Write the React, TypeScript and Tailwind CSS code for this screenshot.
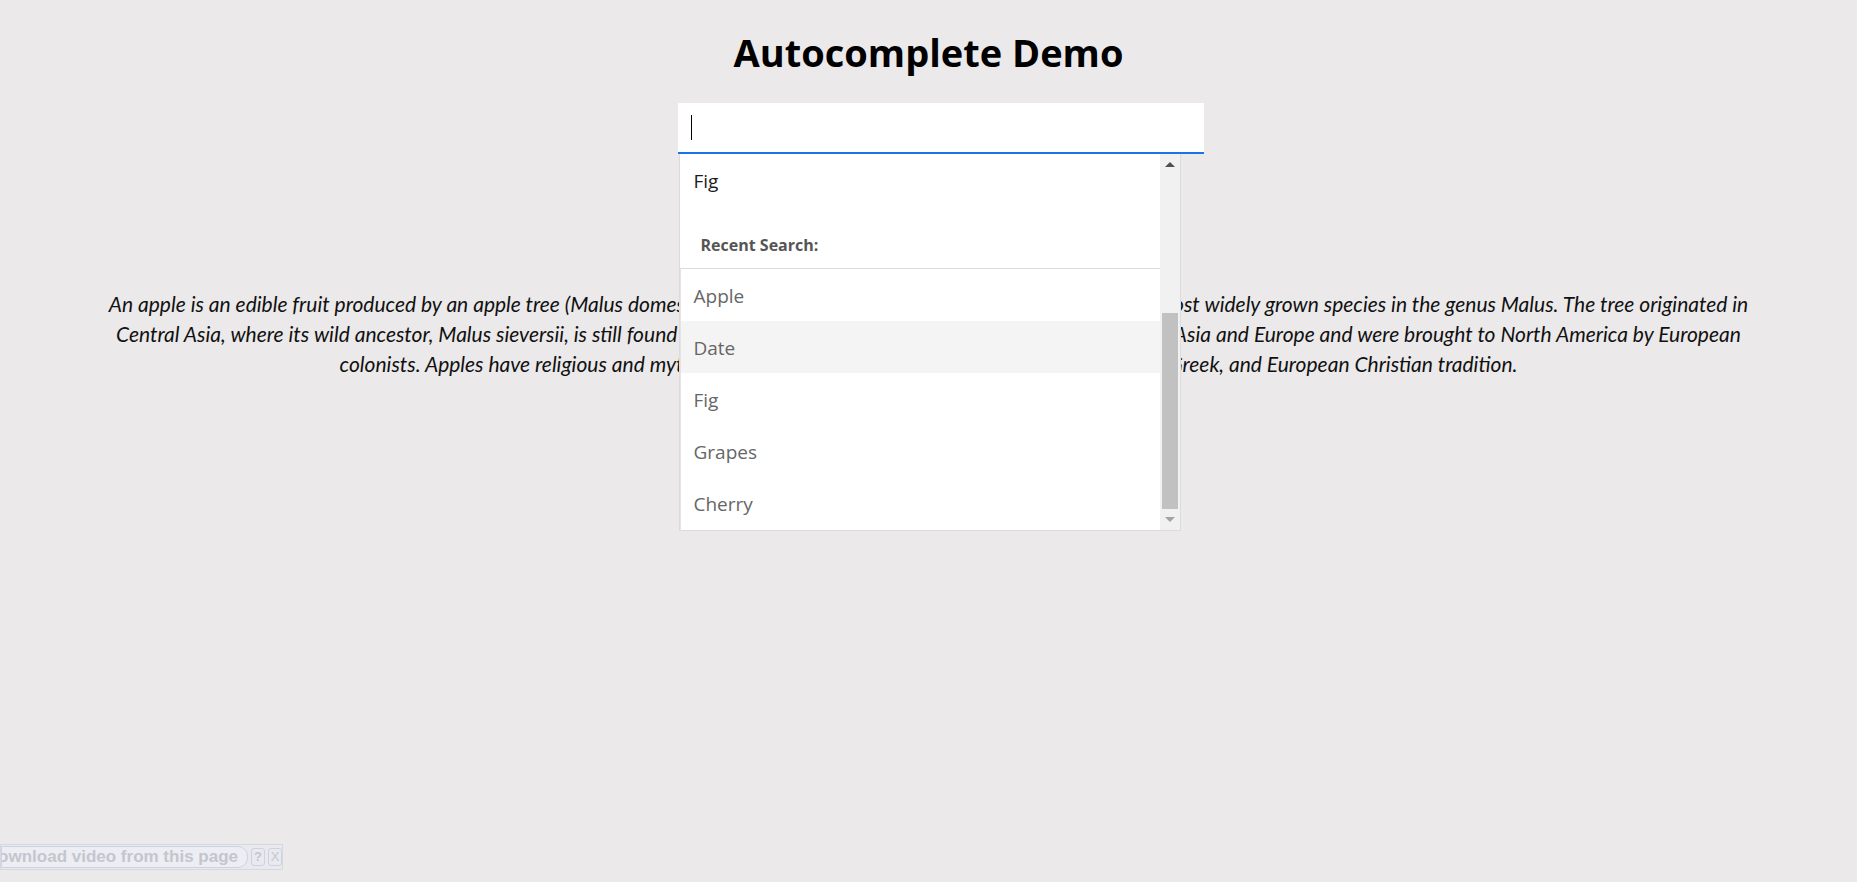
import { useEffect, useRef } from "react";

const RECENT = ["Apple", "Date", "Fig", "Grapes", "Cherry"];

/** Classic scrollbar drawn by hand so the picture does not depend on the browser's own. */
function FakeScrollbar() {
  return (
    <div aria-hidden className="flex w-[21px] shrink-0 flex-col border-r border-[#dcdcdc] bg-[#f1f1f1]">
      <div className="flex h-[21px] items-center justify-center">
        <span className="h-0 w-0 border-x-[5px] border-b-[5px] border-x-transparent border-b-[#505050]" />
      </div>
      <div className="flex-1 px-[2px]">
        <div className="mt-[138px] h-[196px] bg-[#c1c1c1]" />
      </div>
      <div className="flex h-[21px] items-center justify-center">
        <span className="h-0 w-0 border-x-[5px] border-t-[5px] border-x-transparent border-t-[#a3a3a3]" />
      </div>
    </div>
  );
}

function Dropdown() {
  return (
    <div className="absolute left-[1px] top-full z-10 flex h-[377px] w-[502px] border-b border-l border-[#dcdcdc] bg-white">
      <div className="flex min-w-0 flex-1 flex-col">
        <div className="flex h-[54px] shrink-0 items-center px-[14px] text-[19px] text-[#1b1b1b]">Fig</div>
        <div className="flex h-[61px] shrink-0 items-end border-b border-[#dcdcdc] pb-[11px] pl-[21px] text-[16px] font-bold text-[#555]">
          Recent Search:
        </div>
        <ul className="flex-1 border-l border-[#e4e4e4]">
          {RECENT.map((item) => (
            <li
              key={item}
              className={`flex h-[52px] items-center px-[13px] pt-[3px] text-[19px] text-[#666] ${
                item === "Date" ? "bg-[#f4f4f4]" : ""
              }`}
            >
              {item}
            </li>
          ))}
        </ul>
      </div>
      <FakeScrollbar />
    </div>
  );
}

export default function App() {
  const inputRef = useRef<HTMLInputElement>(null);

  useEffect(() => {
    inputRef.current?.focus();
  }, []);

  return (
    <div className="relative min-h-[882px] bg-[#ebe9ea] font-['Open_Sans',sans-serif]">
      <div className="flex flex-col items-center pt-[24px]">
        <h1 className="text-[38px] font-bold leading-[56px] text-black">Autocomplete Demo</h1>

        <div className="relative ml-[24px] mt-[23px] h-[51px] w-[526px]">
          <input
            ref={inputRef}
            type="text"
            className="h-full w-full border-b-2 border-[#1a73e8] bg-white px-[12px] text-[19px] text-black caret-black outline-none"
          />
          {/* caret as caught in the screenshot */}
          <span aria-hidden className="pointer-events-none absolute left-[13px] top-[12px] h-[25px] w-px bg-black" />
          <Dropdown />
        </div>

        <p className="mt-[135px] w-[1700px] text-center font-['Lato',sans-serif] text-[21px] italic leading-[30px] text-[#111]">
          An apple is an edible fruit produced by an apple tree (Malus domestica). Apple trees are cultivated
          worldwide and are the most widely grown species in the genus Malus. The tree originated in
          <br />
          Central Asia, where its wild ancestor, Malus sieversii, is still found today. Apples have been grown for
          thousands of years in Asia and Europe and were brought to North America by European
          <br />
          colonists. Apples have religious and mythological significance in many cultures, including Norse,
          Greek, and European Christian tradition.
        </p>
      </div>

      {/* browser extension overlay in the bottom-left corner */}
      <div className="absolute left-0 top-[844px] flex h-[26px] w-[283px] items-center overflow-hidden border border-[#d3d8e2] bg-[#e9eaf0] font-['Liberation_Sans',Arial,sans-serif]">
        <div className="flex h-[22px] w-[247px] shrink-0 items-center justify-end overflow-hidden whitespace-nowrap rounded-r-[10px] border border-[#cdd2dc] bg-[#eceef3] pr-[9px] text-[17px] font-bold text-[#c3c6cf]">
          Download video from this page
        </div>
        <span className="ml-[3px] flex h-[18px] w-[14px] items-center justify-center rounded-[3px] border border-[#cdd2dc] text-[13px] font-bold text-[#c3c6cf]">
          ?
        </span>
        <span className="ml-[3px] flex h-[18px] w-[14px] items-center justify-center rounded-[3px] border border-[#cdd2dc] text-[13px] text-[#c3c6cf]">
          X
        </span>
      </div>
    </div>
  );
}
